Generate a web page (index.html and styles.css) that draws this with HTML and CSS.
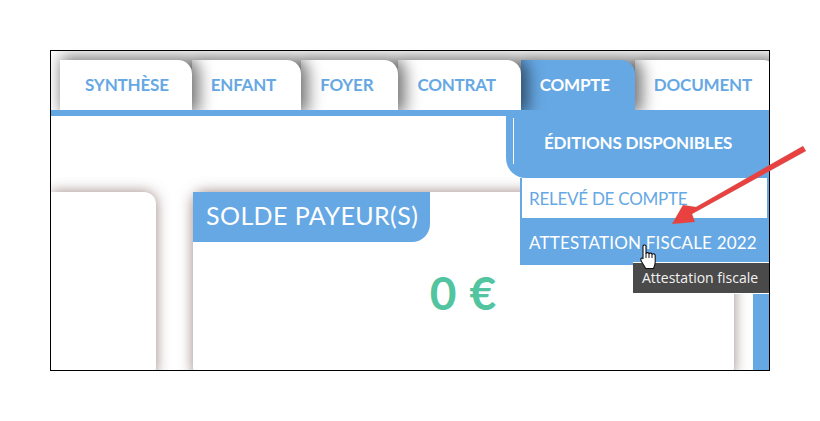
FILE: index.html
```html
<!DOCTYPE html>
<html lang="fr">
<head>
  <meta charset="UTF-8">
  <title>Compte</title>
  <link rel="stylesheet" href="styles.css">
</head>
<body>
  <div class="frame">
    <nav class="tabs">
      <a class="tab tab-first">SYNTHÈSE</a>
      <a class="tab tab-2">ENFANT</a>
      <a class="tab tab-3">FOYER</a>
      <a class="tab tab-4">CONTRAT</a>
      <a class="tab tab-5 active">COMPTE</a>
      <a class="tab tab-6">DOCUMENT</a>
    </nav>
    <div class="main">
      <div class="cards">
        <div class="card card-left"></div>
        <div class="card card-solde">
          <div class="card-title">SOLDE PAYEUR(S)</div>
          <div class="amount">0 €</div>
        </div>
      </div>
      <div class="side-bar"></div>
    </div>

    <div class="dropdown">
      <div class="dropdown-head"><span>ÉDITIONS DISPONIBLES</span></div>
      <ul class="dropdown-list">
        <li class="item">RELEVÉ DE COMPTE</li>
        <li class="item item-hover">ATTESTATION FISCALE 2022</li>
      </ul>
    </div>
    <div class="tooltip">Attestation fiscale</div>
  </div>

  <svg class="arrow" width="150" height="95" viewBox="0 0 150 95">
    <path d="M135 3 L28 64 L15 62 L4 81 L27 79 L24 71 L138 8 Z" fill="#e8413f" stroke="#8a8a8a" stroke-opacity=".35" stroke-width=".6"/>
  </svg>
  <svg class="hand" width="18" height="26" viewBox="0 0 18 26">
    <path d="M3 2.2 C3 .6 6 .6 6 2.2 V9.5 C6.5 8.3 9 8.3 9 9.8 C9.5 8.8 12 8.8 12 10.3 C12.6 9.5 15.2 9.6 15.2 11.4 V18 C15.2 21 14 22.5 13.5 24.5 H5.5 C4.8 22 1.5 18.5 .9 16.2 C.4 14.4 2 13.3 3 14.6 Z" fill="#fff" stroke="#111" stroke-width="1.1" stroke-linejoin="round"/>
    <path d="M6 9.5 V14 M9 9.8 V14 M12 10.3 V14" stroke="#111" stroke-width="1" fill="none"/>
  </svg>
</body>
</html>
```

FILE: styles.css
```css
html, body {
  height: 100%;
}
body {
  margin: 0;
  padding: 50px;
  box-sizing: border-box;
  background: white;
  font-family: 'Lato', sans-serif;
  overflow: hidden;
}
.frame {
  position: relative;
  width: 720px;
  height: 321px;
  box-sizing: border-box;
  border: 1px solid #000;
  overflow: hidden;
  background: white;
  display: flex;
  flex-direction: column;
}

/* tabs */
.tabs {
  display: flex;
  padding: 9px 0 0 9px;
  height: 50px;
  flex-shrink: 0;
}
.tab {
  position: relative;
  background: white;
  color: #66a8e4;
  font-size: 17px;
  font-weight: 700;
  letter-spacing: -0.2px;
  line-height: 50px;
  padding: 0 25px 0 19px;
  border-radius: 0 14px 0 0;
  box-shadow: 4px 0 16px 3px rgba(0, 0, 0, 0.55);
  white-space: nowrap;
}
.tab-first { padding: 0 23px 0 25px; z-index: 6; }
.tab-2 { z-index: 5; }
.tab-3 { z-index: 4; }
.tab-4 { z-index: 3; }
.tab-5 { z-index: 2; }
.tab-6 { z-index: 1; }
.tab.active {
  background: #66a8e4;
  color: white;
}

/* content */
.main {
  position: relative;
  z-index: 10;
  flex: 1;
  display: flex;
  border-top: 6px solid #66a8e4;
  background: white;
  min-height: 0;
}
.cards {
  flex: 1;
  display: flex;
  gap: 37px;
  padding-top: 76px;
}
.card {
  background: white;
  margin-bottom: -9px;
  border-radius: 0 12px 12px 0;
  box-shadow: 0 0 14px rgba(110, 80, 75, 0.7);
}
.card-left {
  width: 105px;
}
.card-solde {
  width: 541px;
  border-radius: 12px;
}
.card-title {
  width: 237px;
  height: 50px;
  box-sizing: border-box;
  padding-left: 13px;
  line-height: 47px;
  font-size: 25px;
  letter-spacing: 0.4px;
  color: white;
  background: #66a8e4;
  border-radius: 0 0 18px 0;
}
.amount {
  margin-top: 24px;
  text-align: center;
  font-size: 46px;
  line-height: 54px;
  font-weight: 700;
  color: #52c4a0;
  letter-spacing: 1px;
}
.side-bar {
  width: 16px;
  margin-left: 19px;
  background: #66a8e4;
}

/* dropdown over the content */
.dropdown {
  position: absolute;
  z-index: 20;
  top: 65px;
  right: 0;
  width: 263px;
}
.dropdown-head {
  height: 62px;
  box-sizing: border-box;
  padding: 2px 0 14px 7px;
  background: #66a8e4;
  border-radius: 0 0 0 20px;
}
.dropdown-head span {
  display: block;
  height: 46px;
  line-height: 50px;
  border-left: 1px solid white;
  padding-left: 30px;
  font-size: 17px;
  font-weight: 700;
  letter-spacing: -0.2px;
  color: white;
  white-space: nowrap;
}
.dropdown-list {
  list-style: none;
  margin: 0 0 0 14px;
  padding: 0;
}
.item {
  height: 42px;
  box-sizing: border-box;
  padding-left: 7px;
  line-height: 42px;
  font-size: 17px;
  letter-spacing: -0.25px;
  color: #66a8e4;
  background: white;
  border: 2px solid #66a8e4;
  border-top: 0;
}
.item-hover {
  height: 45px;
  border: 0;
  padding-left: 9px;
  line-height: 45px;
  letter-spacing: 0.2px;
  color: white;
  background: #66a8e4;
}
.tooltip {
  position: absolute;
  z-index: 21;
  top: 211px;
  right: 0;
  width: 136px;
  height: 32px;
  box-sizing: border-box;
  padding-left: 9px;
  line-height: 29px;
  font-family: 'Open Sans', sans-serif;
  font-size: 14px;
  color: #f2f2f2;
  background: #4a4a4a;
  border-top: 1px solid white;
  border-bottom: 1px solid white;
}

/* annotation layer on the screenshot */
.arrow {
  position: absolute;
  z-index: 30;
  left: 668px;
  top: 143px;
}
.hand {
  position: absolute;
  z-index: 31;
  left: 640px;
  top: 244px;
}
```
